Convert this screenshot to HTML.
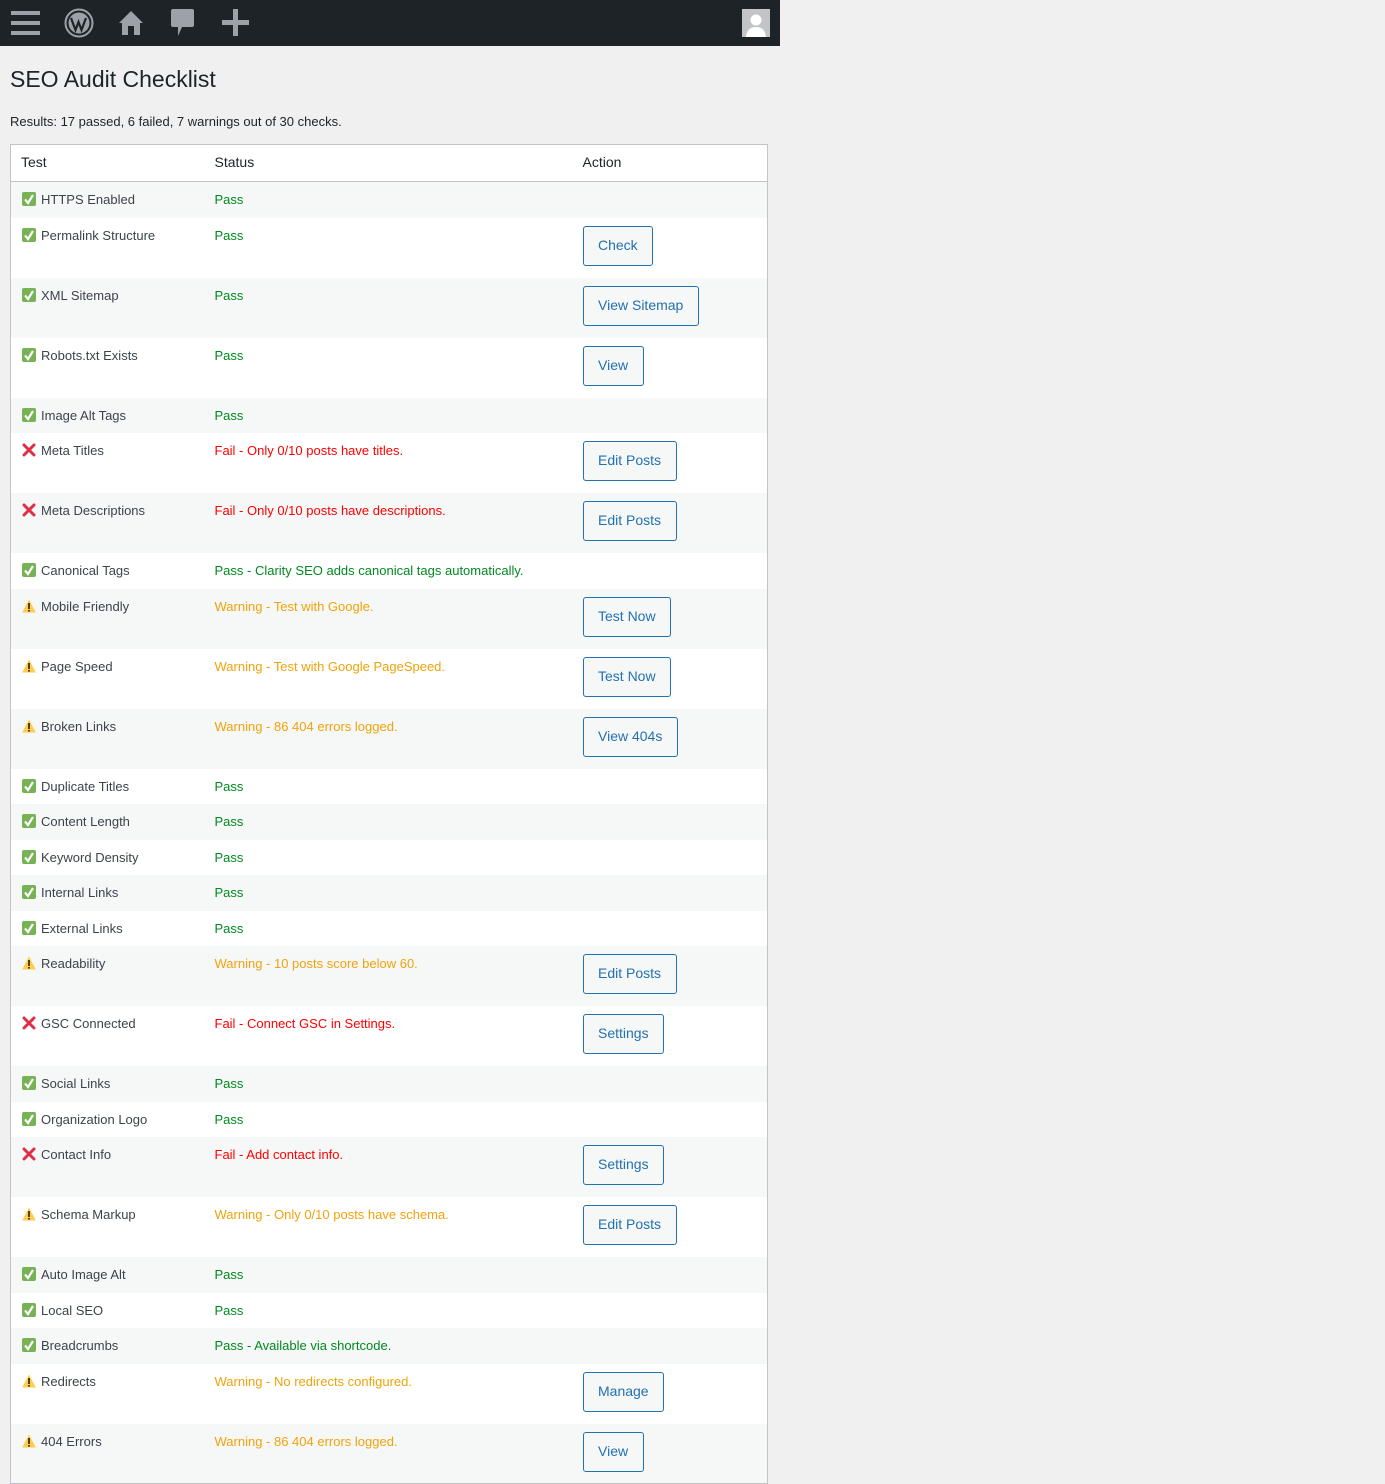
<!DOCTYPE html>
<html><head><meta charset="utf-8"><style>
*{box-sizing:border-box}
body{margin:0;background:#f0f0f1;font-family:"Liberation Sans",Arial,sans-serif;color:#3c434a;font-size:13px;width:1385px;height:1467px;overflow:hidden}
.bar{position:absolute;left:0;top:0;width:780px;height:46px;background:#1d2327}
.bar svg{position:absolute}
h1{position:absolute;left:10px;top:63px;margin:0;font-size:23px;font-weight:400;color:#1d2327;line-height:32px}
.res{position:absolute;left:10px;top:113px;line-height:18px;color:#1d2327}
table{position:absolute;left:10px;top:144px;width:758px;border-collapse:collapse;background:#fff;border:1px solid #c3c4c7}
th{text-align:left;font-weight:400;font-size:14px;color:#1d2327;padding:0 10px 3px;height:37px;border-bottom:1px solid #c3c4c7}
td{vertical-align:top;padding:8px 10px;line-height:19.5px;height:35.4px}
tr.t td{height:60px}
tbody tr:nth-child(odd){background:#f6f7f7}
.i{display:inline-block;width:14px;height:14px;vertical-align:-2px;margin:0 5px 0 1px}
.p{color:#008a20}.f{color:#f00}.w{color:#f0a30a}
.b{display:inline-block;vertical-align:top;height:40px;line-height:36px;padding:0 14.5px;border:1px solid #2271b1;border-radius:3px;background:#f6f7f7;color:#2271b1;font-size:14px}
</style></head><body>
<div class="bar">
<svg style="left:11px;top:11px" width="29" height="24"><rect y="0" width="29" height="4" fill="#9ca2a7"/><rect y="10" width="29" height="4" fill="#9ca2a7"/><rect y="20" width="29" height="4" fill="#9ca2a7"/></svg>
<svg style="left:64px;top:8px" width="30" height="30" viewBox="0 0 30 30"><circle cx="15" cy="15" r="13.5" fill="none" stroke="#9ca2a7" stroke-width="2"/><circle cx="15" cy="15" r="10.5" fill="#9ca2a7"/><path d="M7 10 L11.5 22 L14.5 14 L17.5 22 L22 10" stroke="#1d2327" stroke-width="2.2" fill="none"/></svg>
<svg style="left:118px;top:10px" width="26" height="26" viewBox="0 0 26 26"><path d="M13 1 L25 13 H22 V25 H4 V13 H1 Z" fill="#9ca2a7"/><rect x="10" y="16" width="6" height="9" fill="#1d2327"/></svg>
<svg style="left:171px;top:9px" width="23" height="28" viewBox="0 0 23 28"><path d="M2 0 H21 Q23 0 23 2 V16 Q23 18 21 18 H11 L7 27 V18 H2 Q0 18 0 16 V2 Q0 0 2 0Z" fill="#9ca2a7"/></svg>
<svg style="left:222px;top:9px" width="27" height="27"><rect x="11" y="0" width="5" height="27" fill="#9ca2a7"/><rect x="0" y="11" width="27" height="5" fill="#9ca2a7"/></svg>
<svg style="left:742px;top:9px" width="28" height="28" viewBox="0 0 28 28"><rect width="28" height="28" fill="#c3c4c7"/><circle cx="14" cy="11" r="5.5" fill="#fff"/><path d="M4 28 Q5 18 14 18 Q23 18 24 28Z" fill="#fff"/></svg>
</div>
<h1>SEO Audit Checklist</h1>
<div class="res">Results: 17 passed, 6 failed, 7 warnings out of 30 checks.</div>
<svg width="0" height="0" style="position:absolute"><defs>
<symbol id="ok" viewBox="0 0 14 14"><rect width="14" height="14" rx="2" fill="#77b255"/><path d="M3 7.5 L6 11 L11 3" stroke="#fff" stroke-width="2.2" fill="none"/></symbol>
<symbol id="no" viewBox="0 0 14 14"><path d="M2 2 L12 12 M12 2 L2 12" stroke="#dd2e44" stroke-width="3" stroke-linecap="round"/></symbol>
<symbol id="wa" viewBox="0 0 14 14"><path d="M7 0.5 L13.8 13.5 H0.2Z" fill="#ffcc4d"/><rect x="6.2" y="4" width="1.6" height="6" fill="#231f20"/><rect x="6.2" y="11" width="1.6" height="1.6" fill="#231f20"/></symbol>
</defs></svg>
<table>
<colgroup><col style="width:194px"><col style="width:368px"><col></colgroup>
<thead><tr><th>Test</th><th>Status</th><th>Action</th></tr></thead>
<tbody>
<tr><td><svg class="i"><use href="#ok"/></svg>HTTPS Enabled</td><td class="p">Pass</td><td></td></tr>
<tr class="t"><td><svg class="i"><use href="#ok"/></svg>Permalink Structure</td><td class="p">Pass</td><td><span class="b">Check</span></td></tr>
<tr class="t"><td><svg class="i"><use href="#ok"/></svg>XML Sitemap</td><td class="p">Pass</td><td><span class="b">View Sitemap</span></td></tr>
<tr class="t"><td><svg class="i"><use href="#ok"/></svg>Robots.txt Exists</td><td class="p">Pass</td><td><span class="b">View</span></td></tr>
<tr><td><svg class="i"><use href="#ok"/></svg>Image Alt Tags</td><td class="p">Pass</td><td></td></tr>
<tr class="t"><td><svg class="i"><use href="#no"/></svg>Meta Titles</td><td class="f">Fail - Only 0/10 posts have titles.</td><td><span class="b">Edit Posts</span></td></tr>
<tr class="t"><td><svg class="i"><use href="#no"/></svg>Meta Descriptions</td><td class="f">Fail - Only 0/10 posts have descriptions.</td><td><span class="b">Edit Posts</span></td></tr>
<tr><td><svg class="i"><use href="#ok"/></svg>Canonical Tags</td><td class="p">Pass - Clarity SEO adds canonical tags automatically.</td><td></td></tr>
<tr class="t"><td><svg class="i"><use href="#wa"/></svg>Mobile Friendly</td><td class="w">Warning - Test with Google.</td><td><span class="b">Test Now</span></td></tr>
<tr class="t"><td><svg class="i"><use href="#wa"/></svg>Page Speed</td><td class="w">Warning - Test with Google PageSpeed.</td><td><span class="b">Test Now</span></td></tr>
<tr class="t"><td><svg class="i"><use href="#wa"/></svg>Broken Links</td><td class="w">Warning - 86 404 errors logged.</td><td><span class="b">View 404s</span></td></tr>
<tr><td><svg class="i"><use href="#ok"/></svg>Duplicate Titles</td><td class="p">Pass</td><td></td></tr>
<tr><td><svg class="i"><use href="#ok"/></svg>Content Length</td><td class="p">Pass</td><td></td></tr>
<tr><td><svg class="i"><use href="#ok"/></svg>Keyword Density</td><td class="p">Pass</td><td></td></tr>
<tr><td><svg class="i"><use href="#ok"/></svg>Internal Links</td><td class="p">Pass</td><td></td></tr>
<tr><td><svg class="i"><use href="#ok"/></svg>External Links</td><td class="p">Pass</td><td></td></tr>
<tr class="t"><td><svg class="i"><use href="#wa"/></svg>Readability</td><td class="w">Warning - 10 posts score below 60.</td><td><span class="b">Edit Posts</span></td></tr>
<tr class="t"><td><svg class="i"><use href="#no"/></svg>GSC Connected</td><td class="f">Fail - Connect GSC in Settings.</td><td><span class="b">Settings</span></td></tr>
<tr><td><svg class="i"><use href="#ok"/></svg>Social Links</td><td class="p">Pass</td><td></td></tr>
<tr><td><svg class="i"><use href="#ok"/></svg>Organization Logo</td><td class="p">Pass</td><td></td></tr>
<tr class="t"><td><svg class="i"><use href="#no"/></svg>Contact Info</td><td class="f">Fail - Add contact info.</td><td><span class="b">Settings</span></td></tr>
<tr class="t"><td><svg class="i"><use href="#wa"/></svg>Schema Markup</td><td class="w">Warning - Only 0/10 posts have schema.</td><td><span class="b">Edit Posts</span></td></tr>
<tr><td><svg class="i"><use href="#ok"/></svg>Auto Image Alt</td><td class="p">Pass</td><td></td></tr>
<tr><td><svg class="i"><use href="#ok"/></svg>Local SEO</td><td class="p">Pass</td><td></td></tr>
<tr><td><svg class="i"><use href="#ok"/></svg>Breadcrumbs</td><td class="p">Pass - Available via shortcode.</td><td></td></tr>
<tr class="t"><td><svg class="i"><use href="#wa"/></svg>Redirects</td><td class="w">Warning - No redirects configured.</td><td><span class="b">Manage</span></td></tr>
<tr class="t"><td><svg class="i"><use href="#wa"/></svg>404 Errors</td><td class="w">Warning - 86 404 errors logged.</td><td><span class="b">View</span></td></tr>
</tbody></table>
</body></html>
